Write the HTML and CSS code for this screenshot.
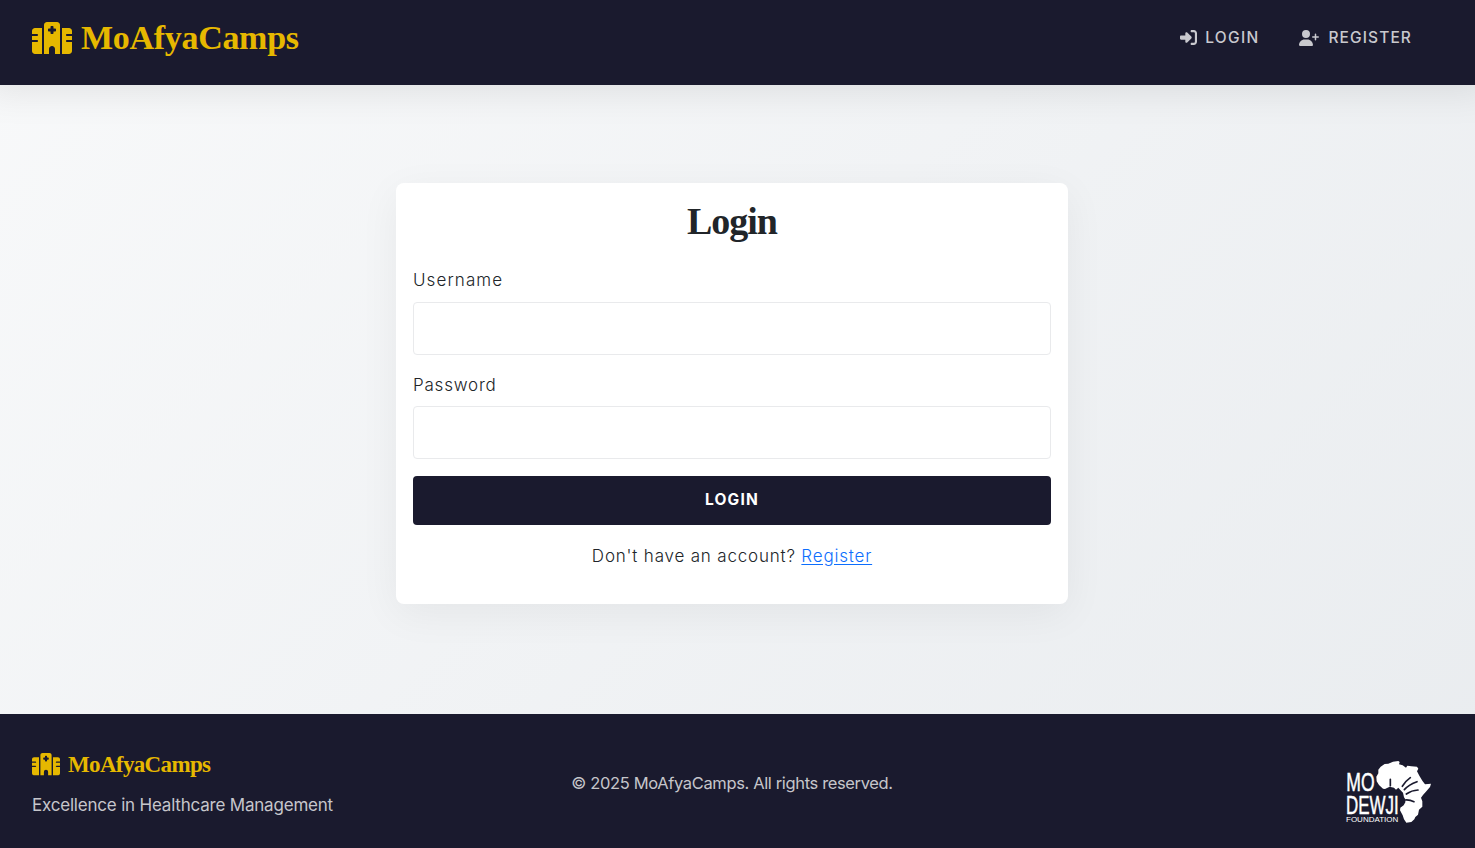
FILE: index.html
```html
<!DOCTYPE html>
<html lang="en">
<head>
<meta charset="utf-8">
<title>MoAfyaCamps - Login</title>
<link rel="stylesheet" href="styles.css">
</head>
<body>
<svg class="sprite" aria-hidden="true">
  <symbol id="hospital" viewBox="0 0 640 512"><path d="M192 48c0-26.500 21.500-48 48-48H400c26.500 0 48 21.500 48 48V512H368V432c0-26.500-21.500-48-48-48s-48 21.500-48 48v80H192V48zM48 96H160V512H48c-26.500 0-48-21.500-48-48V320H80c8.800 0 16-7.200 16-16s-7.200-16-16-16H0V224H80c8.800 0 16-7.200 16-16s-7.200-16-16-16H0V144c0-26.500 21.500-48 48-48zm544 0c26.500 0 48 21.500 48 48v48H560c-8.800 0-16 7.200-16 16s7.200 16 16 16h80v64H560c-8.800 0-16 7.200-16 16s7.200 16 16 16h80V464c0 26.500-21.500 48-48 48H480V96H592zM312 64c-8.800 0-16 7.200-16 16v24H272c-8.800 0-16 7.200-16 16v16c0 8.800 7.200 16 16 16h24v24c0 8.800 7.200 16 16 16h16c8.800 0 16-7.200 16-16V152h24c8.800 0 16-7.200 16-16V120c0-8.800-7.200-16-16-16H344V80c0-8.800-7.200-16-16-16H312z"/></symbol>
</svg>
<header class="navbar">
  <a class="brand"><svg class="brand-icon"><use href="#hospital"/></svg><span class="brand-name">MoAfyaCamps</span></a>
  <nav class="nav">
    <a class="nav-link"><svg class="icon-login" viewBox="0 0 512 512"><path d="M217.900 105.900L340.700 228.700c7.200 7.200 11.300 17.100 11.300 27.300s-4.100 20.100-11.300 27.300L217.900 406.100c-6.400 6.400-15 9.900-24 9.900c-18.700 0-33.900-15.200-33.900-33.900l0-62.100L32 320c-17.700 0-32-14.300-32-32l0-64c0-17.700 14.300-32 32-32l128 0 0-62.100c0-18.700 15.200-33.900 33.900-33.900c9 0 17.600 3.600 24 9.900zM352 416l64 0c17.700 0 32-14.300 32-32l0-256c0-17.700-14.300-32-32-32l-64 0c-17.700 0-32-14.300-32-32s14.300-32 32-32l64 0c53 0 96 43 96 96l0 256c0 53-43 96-96 96l-64 0c-17.700 0-32-14.300-32-32s14.300-32 32-32z"/></svg><span class="login-text">LOGIN</span></a>
    <a class="nav-link"><svg class="icon-register" viewBox="0 0 640 512"><path d="M96 128a128 128 0 1 1 256 0A128 128 0 1 1 96 128zM0 482.300C0 383.800 79.800 304 178.300 304h91.400C368.200 304 448 383.800 448 482.300c0 16.400-13.300 29.700-29.700 29.700H29.700C13.300 512 0 498.700 0 482.300zM504 312V248H440c-13.300 0-24-10.700-24-24s10.700-24 24-24h64V136c0-13.300 10.700-24 24-24s24 10.700 24 24v64h64c13.300 0 24 10.700 24 24s-10.700 24-24 24H552v64c0 13.300-10.700 24-24 24s-24-10.700-24-24z"/></svg><span class="register-text">REGISTER</span></a>
  </nav>
</header>
<main class="main">
  <form class="card">
    <h2 class="title">Login</h2>
    <label class="label" for="user">Username</label>
    <input class="field" id="user" type="text">
    <label class="label label-password" for="pass">Password</label>
    <input class="field" id="pass" type="password">
    <button class="submit" type="button">LOGIN</button>
    <p class="prompt">Don't have an account? <a class="prompt-link" href="#">Register</a></p>
  </form>
</main>
<footer class="footer">
  <div class="about">
    <div class="foot-brand"><svg class="foot-icon"><use href="#hospital"/></svg><span class="foot-name">MoAfyaCamps</span></div>
    <p class="tagline">Excellence in Healthcare Management</p>
  </div>
  <p class="copyright">© 2025 MoAfyaCamps. All rights reserved.</p>
  <svg class="partner" viewBox="30 30 261 192" role="img" aria-label="Mo Dewji Foundation">
    <path class="land" d="M137 50L149 42 160 41 174 35 190 33 194 36 192 43 203 46 213 53 217 47 229 49 246 50 250 56 246 64 253 77 262 92 270 103 288 101 285 111 274 124 264 135 258 143 262 154 262 170 252 179 249 194 241 201 238 208 229 216 214 218 207 208 203 196 195 181 196 173 206 166 211 157 211 148 207 142 204 128 196 120 190 113 183 119 177 113 164 110 150 117 144 116 132 105 125 94 124 80 130 70 130 59z"/>
    <path class="gap" d="M166 88v19M202 109Q214 91 226 83M208 119Q222 103 246 95M214 132Q230 121 249 120M211 150Q224 149 237 155"/>
    <text class="logo-big" x="34" y="123" textLength="85" lengthAdjust="spacingAndGlyphs">MO</text>
    <text class="logo-big" x="33" y="191" textLength="158" lengthAdjust="spacingAndGlyphs">DEWJI</text>
    <text class="logo-small" x="33" y="215" textLength="157" lengthAdjust="spacingAndGlyphs">FOUNDATION</text>
  </svg>
</footer>
</body>
</html>
```
FILE: styles.css
```css
* { box-sizing: border-box; }
body {
  margin: 0;
  height: 848px;
  display: flex;
  flex-direction: column;
  overflow: hidden;
  font-family: Inter, "Liberation Sans", sans-serif;
  font-size: 17px;
  color: #212529;
  background: linear-gradient(135deg, #f8f9fa 0%, #e9ecef 100%);
}
p, h2 { margin: 0; }
svg { fill: currentColor; flex: none; }
.sprite { display: none; }
.navbar {
  height: 84.5px;
  flex: none;
  padding: 0 64px 9px 32px;
  display: flex;
  justify-content: space-between;
  align-items: center;
  background: #1a1a2e;
  box-shadow: 0 -12px 38px 16px rgba(0, 0, 0, .1);
}
.brand, .foot-brand {
  display: flex;
  align-items: center;
  color: #e6b800;
  font-family: "Liberation Serif", serif;
  font-weight: 700;
}
.brand { gap: 9px; }
.brand-icon { width: 40px; height: 32px; }
.brand-name { font-size: 34px; line-height: 40px; letter-spacing: -.3px; }
.nav { display: flex; gap: 40px; }
.nav-link {
  display: flex;
  align-items: center;
  color: #c9c9ce;
  font-size: 15.500px;
  font-weight: 500;
  line-height: 20px;
}
.icon-login { width: 17px; height: 17px; margin-right: 8px; }
.icon-register { width: 20px; height: 16px; margin-right: 9px; }
.login-text { letter-spacing: 1.3px; }
.register-text { letter-spacing: 1.1px; margin-right: -1px; }
.main { flex: 1; padding: 98.500px 0 0 396px; }
.card {
  width: 672px;
  height: 421px;
  padding: 17px;
  display: flex;
  flex-direction: column;
  background: #fff;
  border-radius: 8px;
  box-shadow: 0 10px 42px rgba(0, 0, 0, .055);
}
.title {
  height: 42px;
  text-align: center;
  font: 700 38px/42px "Liberation Serif", serif;
  letter-spacing: -1px;
}
.label { height: 26px; margin: 25px 0 9px; line-height: 26px; font-weight: 300; letter-spacing: 1.100px; }
.label-password { margin: 17.500px 0 8px; letter-spacing: .8px; }
.field {
  width: 100%;
  height: 52.500px;
  border: 1px solid #e9eaec;
  border-radius: 4px;
  outline: 0;
  background: #fff;
}
.submit {
  height: 49.500px;
  margin-top: 17px;
  border: 0;
  border-radius: 4px;
  background: #1a1a2e;
  color: #fff;
  font: 700 15.500px/20px Inter, sans-serif;
  letter-spacing: 1.200px;
}
.prompt { margin-top: 17.500px; line-height: 27px; text-align: center; font-weight: 300; letter-spacing: .81px; }
.prompt-link { color: #0d6efd; text-underline-offset: 2px; }
.footer {
  height: 134.500px;
  flex: none;
  padding: 0 43px 0 32px;
  display: grid;
  grid-template-columns: 400px 600px 1fr;
  background: #1a1a2e;
  color: #c6c6cb;
  line-height: 26px;
}
.about { padding-top: 38px; }
.foot-brand { height: 26px; gap: 8px; }
.foot-icon { width: 28px; height: 22.500px; }
.foot-name { font-size: 23px; line-height: 24px; letter-spacing: -.65px; }
.tagline { margin-top: 14px; letter-spacing: -.2px; }
.copyright { margin-top: 56.500px; text-align: center; font-size: 16.500px; letter-spacing: -.36px; }
.partner { width: 87px; height: 64px; margin-top: 46.500px; justify-self: end; color: #fff; }
.gap { fill: none; stroke: #1a1a2e; stroke-width: 5px; stroke-linecap: round; }
.logo-big { font: 400 80px "Liberation Sans", sans-serif; stroke: #fff; stroke-width: 1.500px; }
.logo-small { font: 400 22px "Liberation Sans", sans-serif; }
```
